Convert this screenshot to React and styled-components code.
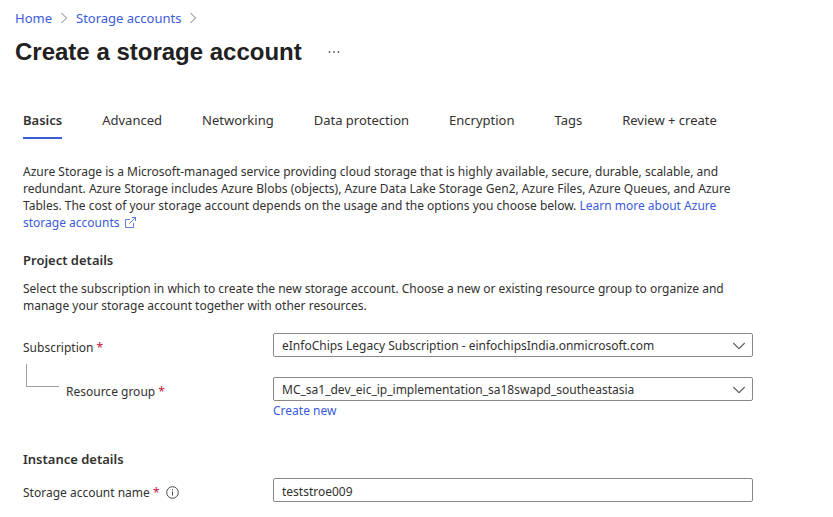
import React from "react";
import styled, { createGlobalStyle, css } from "styled-components";

const Global = createGlobalStyle`
  * { box-sizing: border-box; }
  body {
    margin: 0;
    background: #fff;
    color: #323130;
    font-family: "Noto Sans", sans-serif;
    font-size: 12px;
    line-height: 17px;
  }
`;

const Page = styled.div`
  padding: 8px 15px 14px;
`;

const Link = styled.a`
  color: #3b5bdb;
  text-decoration: none;

  svg {
    margin-left: 2px;
    vertical-align: -1px;
  }
`;

const Crumbs = styled.nav`
  display: flex;
  align-items: center;
  gap: 8px;
  font-size: 13px;
  line-height: 20px;
`;

const TitleRow = styled.header`
  display: flex;
  align-items: center;
  gap: 26px;
  margin-top: 8px;
`;

const Title = styled.h1`
  margin: 0;
  font: bold 24px/32px "Liberation Sans", sans-serif;
  color: #212121;
`;

const MoreButton = styled.button`
  display: flex;
  padding: 0;
  border: 0;
  background: none;
  color: #605e5c;
`;

const Main = styled.main`
  padding: 0 8px;
`;

const Tabs = styled.div`
  display: flex;
  gap: 40px;
  margin-top: 41px;
`;

const Tab = styled.button`
  padding: 1px 0 7px;
  border: 0;
  border-bottom: 2px solid ${(p) => (p.$selected ? "#3b5bdb" : "transparent")};
  background: none;
  color: #323130;
  font: ${(p) => (p.$selected ? 600 : 400)} 13px/20px "Noto Sans", sans-serif;
  white-space: nowrap;
`;

const Intro = styled.p`
  max-width: 724px;
  margin: 24px 0 0;
`;

const Section = styled.section`
  margin-top: ${(p) => (p.$spaced ? 30 : 19)}px;
`;

const Heading = styled.h2`
  margin: 0;
  font-size: 13px;
  line-height: 20px;
  font-weight: 600;
`;

const Description = styled.p`
  max-width: 724px;
  margin: 10px 0 0;
`;

const Fields = styled.div`
  display: grid;
  gap: 20px;
  margin-top: ${(p) => (p.$tight ? 9 : 19)}px;
`;

const Field = styled.div`
  display: grid;
  grid-template-columns: 250px minmax(0, 480px);
  align-items: start;
`;

const LabelCell = styled.div`
  display: flex;
  align-items: center;
  gap: 6px;
  padding-top: 6px;
`;

const Required = styled.span`
  color: #c4143c;
`;

const NestedCell = styled.div`
  display: flex;
  align-items: flex-start;
  gap: 7px;
  padding-left: 3px;
`;

const Branch = styled.span`
  width: 33px;
  height: 23px;
  margin-top: -13px;
  border: solid #a19f9d;
  border-width: 0 0 1px 1px;
`;

const CreateLink = styled(Link)`
  display: inline-block;
  margin-top: 1px;
`;

const control = css`
  width: 100%;
  height: 24px;
  padding: 0 8px;
  border: 1px solid #8a8886;
  border-radius: 2px;
  background: #fff;
  color: #323130;
  font: 12px/17px "Noto Sans", sans-serif;
`;

const Input = styled.input`
  ${control}
  padding-top: 2px;
`;

const Select = styled.select`
  ${control}
  appearance: none;
  grid-area: 1 / 1;
`;

const SelectBox = styled.div`
  display: grid;
  align-items: center;

  svg {
    grid-area: 1 / 1;
    justify-self: end;
    margin: 2px 7px 0 0;
    pointer-events: none;
  }
`;

const InfoButton = styled.button`
  display: flex;
  padding: 0;
  border: 0;
  background: none;
  color: #484644;
`;

const CrumbArrow = () => (
  <svg width="8" height="12" viewBox="0 0 8 12" fill="none" stroke="#797775" aria-hidden="true">
    <path d="M1.500 1l5 5-5 5" />
  </svg>
);

const ChevronDown = () => (
  <svg width="14" height="8" viewBox="0 0 14 8" fill="none" stroke="#605e5c" strokeWidth="1.1" aria-hidden="true">
    <path d="M1.300 1L7 6.700 12.700 1" />
  </svg>
);

const ExternalIcon = () => (
  <svg width="11" height="11" viewBox="0 0 11 11" fill="none" stroke="currentColor" strokeWidth="0.8" aria-hidden="true">
    <path d="M5 2.500H.5v8h8V6M7 .5h3.500V4M10.500.5l-6 6" />
  </svg>
);

const InfoIcon = () => (
  <svg width="13" height="13" viewBox="0 0 13 13" fill="none" stroke="currentColor" aria-hidden="true">
    <circle cx="6.500" cy="6.500" r="5.800" />
    <path d="M6.500 5.500v4M6.500 3.200v1.200" />
  </svg>
);

const MoreIcon = () => (
  <svg width="12" height="4" viewBox="0 0 12 4" fill="currentColor" aria-hidden="true">
    <circle cx="1.500" cy="2" r="0.900" />
    <circle cx="6" cy="2" r="0.900" />
    <circle cx="10.500" cy="2" r="0.900" />
  </svg>
);

const tabs = ["Basics", "Advanced", "Networking", "Data protection", "Encryption", "Tags", "Review + create"];

function FieldLabel({ id, children, info }) {
  return (
    <LabelCell>
      <label htmlFor={id}>
        {children} <Required>*</Required>
      </label>
      {info && (
        <InfoButton type="button" aria-label="More information">
          <InfoIcon />
        </InfoButton>
      )}
    </LabelCell>
  );
}

function Dropdown({ id, value }) {
  return (
    <SelectBox>
      <Select id={id}>
        <option>{value}</option>
      </Select>
      <ChevronDown />
    </SelectBox>
  );
}

export default function App() {
  return (
    <>
      <Global />
      <Page>
        <Crumbs aria-label="Breadcrumb">
          <Link href="#">Home</Link>
          <CrumbArrow />
          <Link href="#">Storage accounts</Link>
          <CrumbArrow />
        </Crumbs>
        <TitleRow>
          <Title>Create a storage account</Title>
          <MoreButton type="button" aria-label="More actions">
            <MoreIcon />
          </MoreButton>
        </TitleRow>
        <Main>
          <Tabs role="tablist">
            {tabs.map((name, i) => (
              <Tab key={name} type="button" role="tab" aria-selected={i === 0} $selected={i === 0}>
                {name}
              </Tab>
            ))}
          </Tabs>
          <Intro>
            Azure Storage is a Microsoft-managed service providing cloud storage that is highly available, secure,
            durable, scalable, and redundant. Azure Storage includes Azure Blobs (objects), Azure Data Lake Storage
            Gen2, Azure Files, Azure Queues, and Azure Tables. The cost of your storage account depends on the usage
            and the options you choose below.{" "}
            <Link href="#">
              Learn more about Azure storage accounts <ExternalIcon />
            </Link>
          </Intro>
          <Section>
            <Heading>Project details</Heading>
            <Description>
              Select the subscription in which to create the new storage account. Choose a new or existing resource
              group to organize and manage your storage account together with other resources.
            </Description>
            <Fields>
              <Field>
                <FieldLabel id="subscription">Subscription</FieldLabel>
                <Dropdown id="subscription" value="eInfoChips Legacy Subscription - einfochipsIndia.onmicrosoft.com" />
              </Field>
              <Field>
                <NestedCell>
                  <Branch />
                  <FieldLabel id="group">Resource group</FieldLabel>
                </NestedCell>
                <div>
                  <Dropdown id="group" value="MC_sa1_dev_eic_ip_implementation_sa18swapd_southeastasia" />
                  <CreateLink href="#">Create new</CreateLink>
                </div>
              </Field>
            </Fields>
          </Section>
          <Section $spaced>
            <Heading>Instance details</Heading>
            <Fields $tight>
              <Field>
                <FieldLabel id="name" info>
                  Storage account name
                </FieldLabel>
                <Input id="name" type="text" defaultValue="teststroe009" />
              </Field>
            </Fields>
          </Section>
        </Main>
      </Page>
    </>
  );
}
